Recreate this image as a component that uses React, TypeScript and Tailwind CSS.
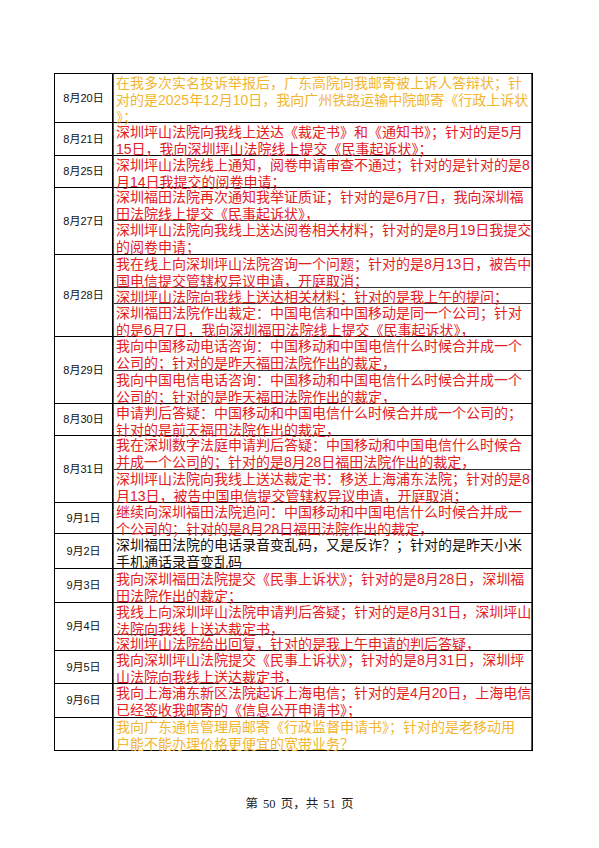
import React from "react";

type Sub = { h?: number; lines: string[] };
type Row = { date: string; h: number; color: string; pt?: number; subs: Sub[] };

const RED = "text-[#e3201f]";
const GOLD = "text-[#f2b530]";
const BLACK = "text-[#111111]";

const rows: Row[] = [
  {
    date: "8月20日",
    h: 49,
    color: GOLD,
    subs: [
      {
        lines: [
          "在我多次实名投诉举报后，广东高院向我邮寄被上诉人答辩状；针",
          "对的是2025年12月10日，我向广州铁路运输中院邮寄《行政上诉状",
          "》；",
        ],
      },
    ],
  },
  {
    date: "8月21日",
    h: 33,
    color: RED,
    subs: [
      {
        lines: [
          "深圳坪山法院向我线上送达《裁定书》和《通知书》；针对的是5月",
          "15日，我向深圳坪山法院线上提交《民事起诉状》；",
        ],
      },
    ],
  },
  {
    date: "8月25日",
    h: 32,
    color: RED,
    subs: [
      {
        lines: [
          "深圳坪山法院线上通知，阅卷申请审查不通过；针对的是针对的是8",
          "月14日我提交的阅卷申请；",
        ],
      },
    ],
  },
  {
    date: "8月27日",
    h: 67,
    color: RED,
    subs: [
      {
        h: 33,
        lines: [
          "深圳福田法院再次通知我举证质证；针对的是6月7日，我向深圳福",
          "田法院线上提交《民事起诉状》，",
        ],
      },
      {
        lines: [
          "深圳坪山法院向我线上送达阅卷相关材料；针对的是8月19日我提交",
          "的阅卷申请；",
        ],
      },
    ],
  },
  {
    date: "8月28日",
    h: 82,
    color: RED,
    subs: [
      {
        h: 33,
        lines: [
          "我在线上向深圳坪山法院咨询一个问题；针对的是8月13日，被告中",
          "国电信提交管辖权异议申请，开庭取消；",
        ],
      },
      {
        h: 16,
        lines: ["深圳坪山法院向我线上送达相关材料；针对的是我上午的提问；"],
      },
      {
        lines: [
          "深圳福田法院作出裁定：中国电信和中国移动是同一个公司；针对",
          "的是6月7日，我向深圳福田法院线上提交《民事起诉状》，",
        ],
      },
    ],
  },
  {
    date: "8月29日",
    h: 67,
    color: RED,
    subs: [
      {
        h: 34,
        lines: [
          "我向中国移动电话咨询：中国移动和中国电信什么时候合并成一个",
          "公司的；针对的是昨天福田法院作出的裁定，",
        ],
      },
      {
        lines: [
          "我向中国电信电话咨询：中国移动和中国电信什么时候合并成一个",
          "公司的；针对的是昨天福田法院作出的裁定，",
        ],
      },
    ],
  },
  {
    date: "8月30日",
    h: 32,
    color: RED,
    subs: [
      {
        lines: [
          "申请判后答疑：中国移动和中国电信什么时候合并成一个公司的；",
          "针对的是前天福田法院作出的裁定，",
        ],
      },
    ],
  },
  {
    date: "8月31日",
    h: 67,
    color: RED,
    subs: [
      {
        h: 34,
        lines: [
          "我在深圳数字法庭申请判后答疑：中国移动和中国电信什么时候合",
          "并成一个公司的；针对的是8月28日福田法院作出的裁定，",
        ],
      },
      {
        lines: [
          "深圳坪山法院向我线上送达裁定书：移送上海浦东法院；针对的是8",
          "月13日，被告中国电信提交管辖权异议申请，开庭取消；",
        ],
      },
    ],
  },
  {
    date: "9月1日",
    h: 31,
    color: RED,
    subs: [
      {
        lines: [
          "继续向深圳福田法院追问：中国移动和中国电信什么时候合并成一",
          "个公司的；针对的是8月28日福田法院作出的裁定，",
        ],
      },
    ],
  },
  {
    date: "9月2日",
    h: 35,
    color: BLACK,
    pt: 3,
    subs: [
      {
        lines: [
          "深圳福田法院的电话录音变乱码，又是反诈？；针对的是昨天小米",
          "手机通话录音变乱码",
        ],
      },
    ],
  },
  {
    date: "9月3日",
    h: 34,
    color: RED,
    pt: 2,
    subs: [
      {
        lines: [
          "我向深圳福田法院提交《民事上诉状》；针对的是8月28日，深圳福",
          "田法院作出的裁定；",
        ],
      },
    ],
  },
  {
    date: "9月4日",
    h: 48,
    color: RED,
    subs: [
      {
        h: 32,
        lines: [
          "我线上向深圳坪山法院申请判后答疑；针对的是8月31日，深圳坪山",
          "法院向我线上送达裁定书，",
        ],
      },
      {
        lines: ["深圳坪山法院给出回复，针对的是我上午申请的判后答疑，"],
      },
    ],
  },
  {
    date: "9月5日",
    h: 33,
    color: RED,
    subs: [
      {
        lines: [
          "我向深圳坪山法院提交《民事上诉状》；针对的是8月31日，深圳坪",
          "山法院向我线上送达裁定书，",
        ],
      },
    ],
  },
  {
    date: "9月6日",
    h: 34,
    color: RED,
    subs: [
      {
        lines: [
          "我向上海浦东新区法院起诉上海电信；针对的是4月20日，上海电信",
          "已经签收我邮寄的《信息公开申请书》；",
        ],
      },
    ],
  },
  {
    date: "",
    h: 33,
    color: GOLD,
    subs: [
      {
        lines: [
          "我向广东通信管理局邮寄《行政监督申请书》；针对的是老移动用",
          "户能不能办理价格更便宜的宽带业务？",
        ],
      },
    ],
  },
];

export default function App() {
  return (
    <div className="w-[599px] h-[848px] bg-white overflow-hidden flex flex-col">
      <div className="ml-[54px] mt-[73px] w-[479px] border-t border-l border-r border-black [font-family:'Liberation_Sans','Noto_Sans_CJK_SC',sans-serif]">
        {rows.map((r, i) => (
          <div
            key={i}
            className="flex border-b border-black"
            style={{ height: r.h }}
          >
            <div className="w-[58px] shrink-0 border-r border-black flex items-center justify-center text-[11px] text-[#111] leading-none">
              {r.date}
            </div>
            <div className="flex-1 flex flex-col border-l border-r border-[#555]">
              {r.subs.map((s, j) => {
                const last = j === r.subs.length - 1;
                return (
                  <div
                    key={j}
                    className={
                      (last ? "flex-1 " : "shrink-0 border-b border-[#333] ") +
                      "pl-[2px] text-[14px] leading-[17px] whitespace-nowrap " +
                      r.color
                    }
                    style={{
                      paddingTop: r.pt ?? 1,
                      ...(s.h && !last ? { height: s.h } : {}),
                    }}
                  >
                    {s.lines.map((l, k) => (
                      <div key={k}>{l}</div>
                    ))}
                  </div>
                );
              })}
            </div>
          </div>
        ))}
      </div>
      <div className="mt-[44px] text-center text-[12.5px] text-[#222] [font-family:'Liberation_Serif','Noto_Sans_CJK_SC',serif] [word-spacing:2px]">
        第 50 页，共 51 页
      </div>
    </div>
  );
}
